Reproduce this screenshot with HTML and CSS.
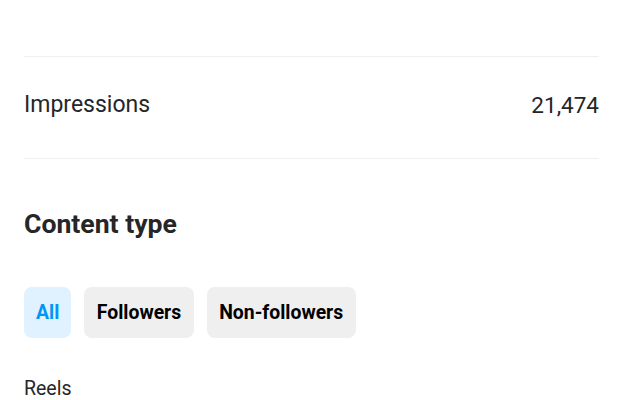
FILE: index.html
```html
<!DOCTYPE html>
<html>
<head>
<meta charset="utf-8">
<link rel="stylesheet" href="styles.css">
</head>
<body>
<div class="page">
  <div class="top-hint"></div>
  <div class="divider first"></div>
  <div class="metric">
    <span class="label">Impressions</span>
    <span class="value">21,474</span>
  </div>
  <div class="divider"></div>
  <h2 class="section-title">Content type</h2>
  <div class="chips">
    <button class="chip active">All</button>
    <button class="chip">Followers</button>
    <button class="chip">Non-followers</button>
  </div>
  <div class="sub-label">Reels</div>
</div>
</body>
</html>
```

FILE: styles.css
```css
html, body {
  margin: 0;
  padding: 0;
  background: #ffffff;
}
body {
  font-family: Roboto, "Noto Sans", Arial, sans-serif;
  color: #262626;
  width: 623px;
  height: 400px;
  overflow: hidden;
}
.page {
  padding: 0 24px;
  display: flex;
  flex-direction: column;
}
.top-hint {
  height: 56px;
}
.divider {
  height: 1px;
  background: #efefef;
}
.metric {
  display: flex;
  justify-content: space-between;
  align-items: center;
  height: 101px;
  padding-bottom: 6px;
  box-sizing: border-box;
  font-size: 23px;
  line-height: 28px;
  color: #262626;
}
.value {
  font-size: 22.5px;
  line-height: 28px;
}
.section-title {
  margin: 0;
  padding-top: 49px;
  font-size: 26.6px;
  font-weight: 700;
  line-height: 32px;
  color: #262626;
}
.chips {
  display: flex;
  gap: 13px;
  margin-top: 47px;
}
.chip {
  font-family: inherit;
  border: none;
  background: #efefef;
  border-radius: 8px;
  height: 51px;
  padding: 0 12.5px;
  font-size: 19.4px;
  font-weight: 700;
  color: #000000;
}
.chip.active {
  background: #e0f1ff;
  color: #0095f6;
  padding: 0 12px;
}
.sub-label {
  margin-top: 39px;
  font-size: 19.5px;
  color: #262626;
}
```
